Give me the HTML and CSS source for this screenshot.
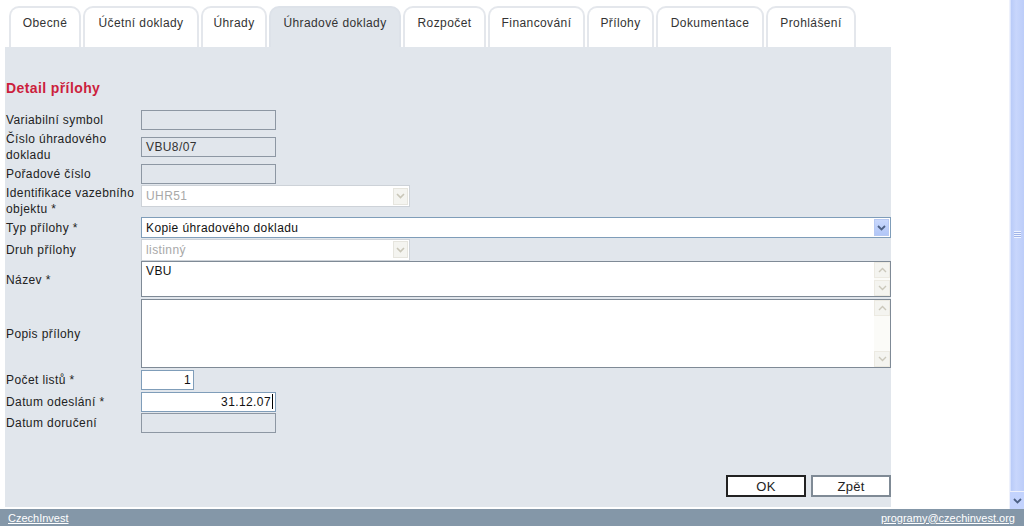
FILE: index.html
```html
<!DOCTYPE html>
<html lang="cs">
<head>
  <meta charset="UTF-8">
  <title>Detail přílohy</title>
  <link rel="stylesheet" href="styles.css">
</head>
<body>

  <div class="frame">
    <div class="page">

      <!-- Tabs -->
      <div class="tabs">
        <div class="tab">Obecné</div>
        <div class="tab">Účetní doklady</div>
        <div class="tab">Úhrady</div>
        <div class="tab active">Úhradové doklady</div>
        <div class="tab">Rozpočet</div>
        <div class="tab">Financování</div>
        <div class="tab">Přílohy</div>
        <div class="tab">Dokumentace</div>
        <div class="tab">Prohlášení</div>
      </div>

      <div class="panel">
        <h2 class="heading">Detail přílohy</h2>

        <div class="form">
          <div class="row h20">
            <div class="label">Variabilní symbol</div>
            <div class="field short disabled"></div>
          </div>
          <div class="row h32">
            <div class="label">Číslo úhradového dokladu</div>
            <div class="field short disabled">VBU8/07</div>
          </div>
          <div class="row h20">
            <div class="label">Pořadové číslo</div>
            <div class="field short disabled"></div>
          </div>
          <div class="row h31 top">
            <div class="label">Identifikace vazebního objektu *</div>
            <div class="select mid off">
              <span class="value">UHR51</span>
              <span class="arrow"><svg width="9" height="6" viewBox="0 0 9 6"><path d="M1 1l3.5 3.5L8 1" fill="none" stroke="currentColor" stroke-width="1.6"/></svg></span>
            </div>
          </div>
          <div class="row h21">
            <div class="label">Typ přílohy *</div>
            <div class="select wide">
              <span class="value">Kopie úhradového dokladu</span>
              <span class="arrow"><svg width="9" height="6" viewBox="0 0 9 6"><path d="M1 1l3.5 3.5L8 1" fill="none" stroke="currentColor" stroke-width="1.8"/></svg></span>
            </div>
          </div>
          <div class="row h21">
            <div class="label">Druh přílohy</div>
            <div class="select mid off">
              <span class="value">listinný</span>
              <span class="arrow"><svg width="9" height="6" viewBox="0 0 9 6"><path d="M1 1l3.5 3.5L8 1" fill="none" stroke="currentColor" stroke-width="1.6"/></svg></span>
            </div>
          </div>
          <div class="row h37">
            <div class="label">Název *</div>
            <div class="area">
              <span class="area-text">VBU</span>
              <span class="area-bar">
                <span class="bar-btn"><svg width="9" height="6" viewBox="0 0 9 6"><path d="M1 5l3.5-3.5L8 5" fill="none" stroke="currentColor" stroke-width="1.4"/></svg></span>
                <span class="bar-btn"><svg width="9" height="6" viewBox="0 0 9 6"><path d="M1 1l3.5 3.5L8 1" fill="none" stroke="currentColor" stroke-width="1.4"/></svg></span>
              </span>
            </div>
          </div>
          <div class="row h69">
            <div class="label">Popis přílohy</div>
            <div class="area">
              <span class="area-text"></span>
              <span class="area-bar">
                <span class="bar-btn"><svg width="9" height="6" viewBox="0 0 9 6"><path d="M1 5l3.5-3.5L8 5" fill="none" stroke="currentColor" stroke-width="1.4"/></svg></span>
                <span class="bar-btn"><svg width="9" height="6" viewBox="0 0 9 6"><path d="M1 1l3.5 3.5L8 1" fill="none" stroke="currentColor" stroke-width="1.4"/></svg></span>
              </span>
            </div>
          </div>
          <div class="row h21">
            <div class="label">Počet listů *</div>
            <div class="field tiny num">1</div>
          </div>
          <div class="row h21">
            <div class="label">Datum odeslání *</div>
            <div class="field short num">31.12.07<span class="caret"></span></div>
          </div>
          <div class="row h20">
            <div class="label">Datum doručení</div>
            <div class="field short disabled"></div>
          </div>
        </div>

        <div class="buttons">
          <button class="btn default">OK</button>
          <button class="btn">Zpět</button>
        </div>
      </div>
    </div>

    <!-- window scrollbar -->
    <div class="vscroll">
      <div class="thumb"><span class="grip"></span></div>
      <div class="scroll-btn"><svg width="9" height="6" viewBox="0 0 9 6"><path d="M1 1l3.5 3.5L8 1" fill="none" stroke="currentColor" stroke-width="1.8"/></svg></div>
    </div>
  </div>

  <div class="footer">
    <a href="#">CzechInvest</a>
    <a href="#">programy@czechinvest.org</a>
  </div>

</body>
</html>
```

FILE: styles.css
```css
body {
  margin: 0;
  padding: 0;
  font-family: 'Liberation Sans', Arial, sans-serif;
  font-size: 12px;
  letter-spacing: 0.4px;
  color: #222;
  background: white;
  height: 526px;
  overflow: hidden;
}

.frame {
  display: flex;
  height: 509px;
}

.page {
  flex: 1;
  padding: 6px 0 0 5px;
  background: white;
}

/* tabs */
.tabs {
  display: flex;
  gap: 2px;
  padding-left: 4px;
  height: 41px;
}

.tab {
  box-sizing: border-box;
  height: 41px;
  padding: 7px 0 0;
  line-height: 16px;
  text-align: center;
  color: #333;
  background: white;
  border: 2px solid #e4e7ec;
  border-bottom: none;
  border-radius: 10px 10px 0 0;
  white-space: nowrap;
}

.tab:nth-child(1) { width: 72px; }
.tab:nth-child(2) { width: 116px; }
.tab:nth-child(3) { width: 66px; }
.tab:nth-child(4) { width: 132px; }
.tab:nth-child(5) { width: 83px; }
.tab:nth-child(6) { width: 97px; }
.tab:nth-child(7) { width: 67px; }
.tab:nth-child(8) { width: 108px; }
.tab:nth-child(9) { width: 90px; }

.tab.active {
  background: #e1e6ec;
  border-color: #dde2e9;
}

/* panel */
.panel {
  display: flex;
  flex-direction: column;
  width: 886px;
  height: 460px;
  box-sizing: border-box;
  padding: 33px 0 10px 1px;
  background: #e1e6ec;
}

.heading {
  margin: 0 0 13px;
  font-size: 14px;
  line-height: 17px;
  letter-spacing: 0.4px;
  color: #cc1f3d;
}

.form {
  display: flex;
  flex-direction: column;
  gap: 1px;
}

.row {
  display: flex;
  align-items: center;
}

.row.top { align-items: flex-start; }

.h20 { height: 20px; }
.h21 { height: 21px; }
.h31 { height: 31px; }
.h32 { height: 32px; }
.h37 { height: 37px; }
.h69 { height: 69px; }

.label {
  width: 135px;
  line-height: 16px;
  flex-shrink: 0;
}

/* inputs */
.field {
  box-sizing: border-box;
  height: 20px;
  line-height: 18px;
  padding: 0 4px;
  background: white;
  border: 1px solid #7f9db9;
  color: #111;
}

.field.disabled {
  background: #e1e6ec;
  border-color: #8d97a3;
  color: #333;
}

.short { width: 135px; }
.tiny { width: 53px; }
.num { text-align: right; padding-right: 2px; }

.caret {
  display: inline-block;
  width: 1px;
  height: 15px;
  margin-left: 1px;
  vertical-align: -3px;
  background: #000;
}

/* selects */
.select {
  box-sizing: border-box;
  display: flex;
  align-items: center;
  justify-content: space-between;
  height: 21px;
  padding: 1px 1px 1px 4px;
  background: white;
  border: 1px solid #7f9db9;
  color: #111;
}

.select.mid { width: 269px; height: 22px; }
.select.wide { flex: 1; }

.select .arrow {
  display: flex;
  align-items: center;
  justify-content: center;
  width: 15px;
  height: 17px;
  background: linear-gradient(#c9d8fc, #b1c6f7);
  border: 1px solid #b7c9f3;
  color: #4d6185;
  box-sizing: border-box;
}

.select.off {
  border-color: #cdd2d8;
  color: #a8a8a8;
}

.select.off .arrow {
  background: #f4f4f0;
  border-color: #e6e5de;
  color: #c9c6b8;
}

/* textareas */
.area {
  flex: 1;
  align-self: stretch;
  display: flex;
  justify-content: space-between;
  background: white;
  border: 1px solid #7f8a96;
  box-sizing: border-box;
}

.h37 .area { margin-bottom: 1px; }

.area-text {
  padding: 2px 4px;
  line-height: 14px;
  color: #111;
}

.area-bar {
  display: flex;
  flex-direction: column;
  justify-content: space-between;
  width: 16px;
  background: #fbfbf8;
}

.bar-btn {
  display: flex;
  align-items: center;
  justify-content: center;
  height: 16px;
  background: #f4f4f0;
  border: 1px solid #eceae2;
  box-sizing: border-box;
  color: #cbc8bb;
}

/* buttons */
.buttons {
  display: flex;
  justify-content: flex-end;
  gap: 5px;
  margin-top: auto;
}

.btn {
  width: 80px;
  height: 22px;
  padding: 0;
  font-family: 'Liberation Sans', Arial, sans-serif;
  font-size: 13px;
  letter-spacing: 0.3px;
  color: #222;
  background: white;
  border: 2px solid #7f8a95;
}

.btn.default {
  border-color: #222;
}

/* scrollbar of the frame */
.vscroll {
  display: flex;
  flex-direction: column;
  width: 14px;
  border-left: 1px solid #eef1fb;
  background: #eef1fb;
}

.thumb {
  flex: 1;
  display: flex;
  align-items: center;
  justify-content: center;
  background: linear-gradient(90deg, #b9cbf8, #c8d6fc 40%, #bccdf9);
  border-left: 1px solid #d8e2fd;
}

.grip {
  width: 7px;
  height: 7px;
  margin-bottom: 22px;
  background: repeating-linear-gradient(#eef3ff 0 1px, #9fb3e8 1px 2px);
}

.scroll-btn {
  display: flex;
  align-items: center;
  justify-content: center;
  height: 17px;
  margin-top: 1px;
  background: #c3d3fd;
  color: #4d6185;
}

/* footer */
.footer {
  display: flex;
  justify-content: space-between;
  align-items: center;
  height: 17px;
  padding: 0 9px 0 8px;
  background: #8497a8;
}

.footer a {
  color: white;
  font-size: 11px;
  letter-spacing: 0;
}
```
